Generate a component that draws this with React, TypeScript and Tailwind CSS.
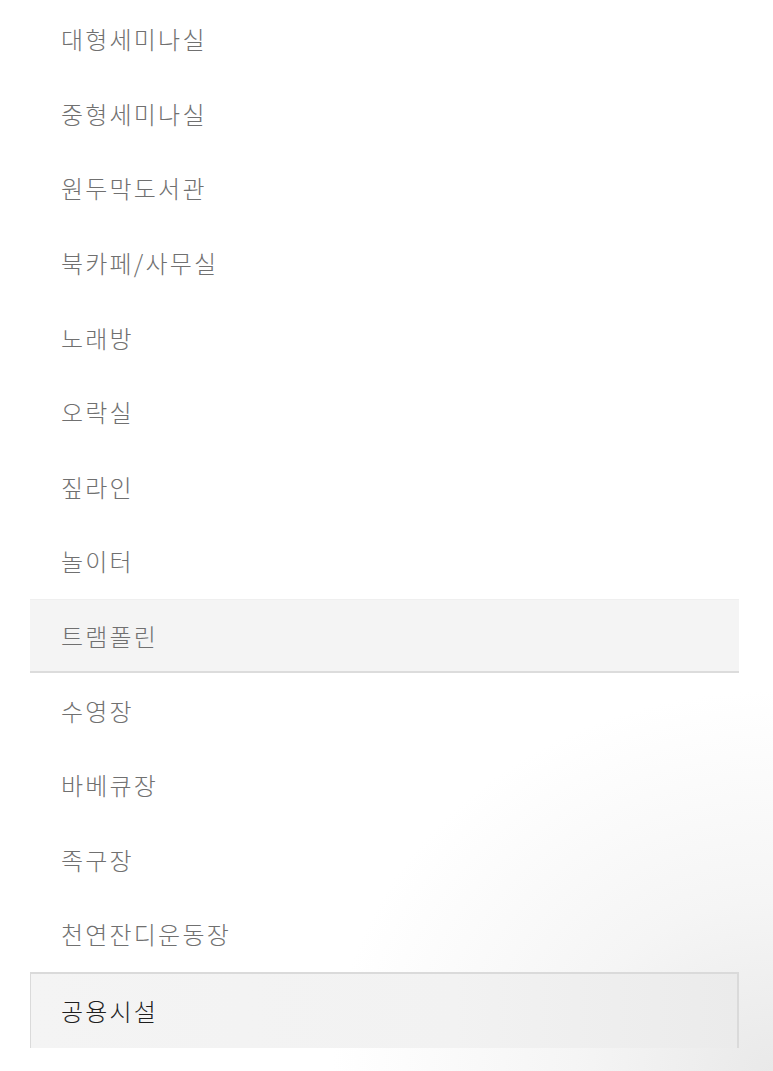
import React from 'react';

const ITEMS = [
  '대형세미나실',
  '중형세미나실',
  '원두막도서관',
  '북카페/사무실',
  '노래방',
  '오락실',
  '짚라인',
  '놀이터',
  '트램폴린',
  '수영장',
  '바베큐장',
  '족구장',
  '천연잔디운동장',
];

const App: React.FC = () => {
  return (
    <div
      className="min-h-[1071px] w-full bg-[radial-gradient(ellipse_440px_380px_at_100%_100%,#e9e9e9_0%,#f5f5f5_45%,#ffffff_100%)] pt-[2px] px-[30px]"
      style={{ fontFamily: '"Noto Sans CJK KR", "Noto Sans", sans-serif' }}
    >
      <ul className="w-[709px]">
        {ITEMS.map((item) => {
          const hovered = item === '트램폴린';
          return (
            <li
              key={item}
              className={`flex h-[74.6px] items-center pl-[31px] text-[24px] font-light tracking-[2.2px] text-[#707070] ${
                hovered ? 'border-t border-b-2 border-t-[#efefef] border-b-[#dcdcdc] bg-[#f4f4f4]' : ''
              }`}
            >
              {item}
            </li>
          );
        })}
        <li className="flex h-[76px] items-center border-t-2 border-l border-r-2 border-[#dadada] bg-[linear-gradient(90deg,#f4f4f4_0%,#f2f2f2_60%,#ebebeb_100%)] pl-[30px] text-[24px] font-light tracking-[2.2px] text-[#1e1e1e]">
          공용시설
        </li>
      </ul>
    </div>
  );
};

export default App;
